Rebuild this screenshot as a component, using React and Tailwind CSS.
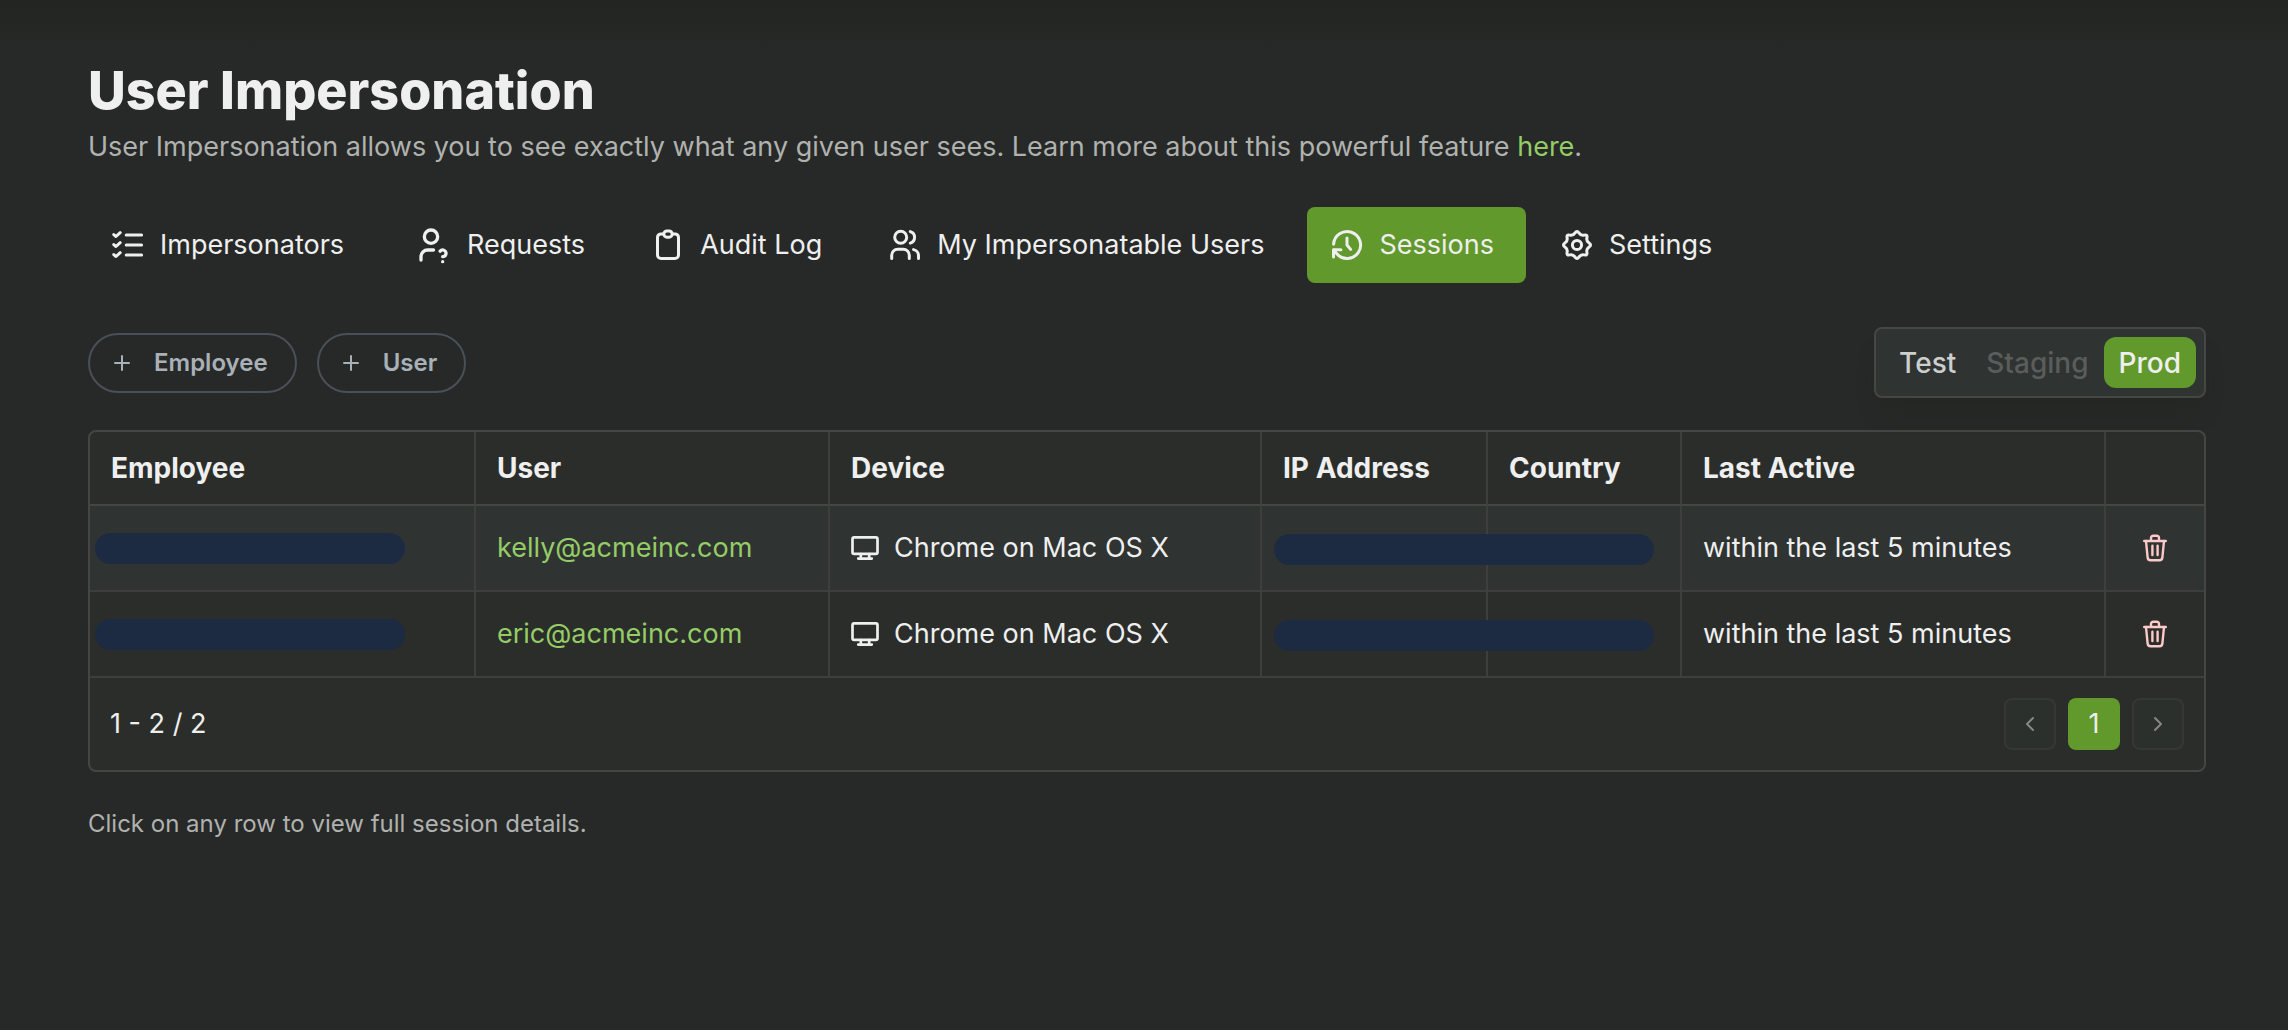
import { ChevronLeft, ChevronRight, Plus } from 'lucide-react';
import { TbUserQuestion } from 'react-icons/tb';
import { useState } from 'react';
import clsx from 'clsx';

function Icon({ children, className = 'size-8', viewBox = '0 0 32 32', strokeWidth = 3 }) {
  return (
    <svg
      aria-hidden="true"
      viewBox={viewBox}
      fill="none"
      stroke="currentColor"
      strokeWidth={strokeWidth}
      strokeLinecap="round"
      strokeLinejoin="round"
      className={clsx('shrink-0', className)}
    >
      {children}
    </svg>
  );
}

const ChecklistIcon = () => (
  <Icon>
    <path d="M1.8 5.6l2.2 1.9 4.2-3.8M1.8 15.6l2.2 1.9 4.2-3.8M1.8 25.6l2.2 1.9 4.2-3.8" />
    <path d="M14.2 6h15.4M14.2 16h15.4M14.2 26h15.4" />
  </Icon>
);

const ClipboardIcon = () => (
  <Icon>
    <path d="M11.5 4.9H9a3.5 3.5 0 0 0-3.5 3.5v17.6a3.5 3.5 0 0 0 3.5 3.5h14a3.5 3.5 0 0 0 3.5-3.5V8.4A3.5 3.5 0 0 0 23 4.9h-2.5" />
    <rect x="11.8" y="2" width="8.4" height="6.2" rx="3.1" />
  </Icon>
);

const PeopleIcon = () => (
  <Icon>
    <circle cx="11.7" cy="8.3" r="6" />
    <path d="M2.7 29.5v-3.2a6 6 0 0 1 6-6h5.6a6 6 0 0 1 6 6v3.2" />
    <path d="M21.3 2.6a6 6 0 0 1 0 11.5M24.6 20.6a6 6 0 0 1 4.9 5.9v3" />
  </Icon>
);

const HistoryIcon = () => (
  <Icon>
    <path d="M2.6 15.2A13.5 13.5 0 1 1 5.8 24.8L2.8 21" />
    <path d="M2.5 28v-7.2h7.4M16 9v7l3.6 4.4" />
  </Icon>
);

const GearIcon = () => (
  <Icon>
    <circle cx="16" cy="16" r="4.6" />
    <path d="M14.1 3.9Q16 1 17.9 3.9Q19.8 6.8 23.2 6.1Q26.6 5.4 25.9 8.8Q25.2 12.2 28.1 14.1Q31 16 28.1 17.9Q25.2 19.8 25.9 23.2Q26.6 26.6 23.2 25.9Q19.8 25.2 17.9 28.1Q16 31 14.1 28.1Q12.2 25.2 8.8 25.9Q5.4 26.6 6.1 23.2Q6.8 19.8 3.9 17.9Q1 16 3.9 14.1Q6.8 12.2 6.1 8.8Q5.4 5.4 8.8 6.1Q12.2 6.8 14.1 3.9Z" />
  </Icon>
);

const MonitorIcon = () => (
  <Icon className="h-6 w-7" viewBox="0 0 28 24" strokeWidth={2.7}>
    <rect x="1.5" y="1.4" width="25" height="16.4" rx="1.6" />
    <path d="M9.8 18v4M18.2 18v4M7.2 22.6h13.6" />
  </Icon>
);

const TrashIcon = () => (
  <Icon className="h-7 w-6" viewBox="0 0 24 28" strokeWidth={2.4}>
    <path d="M1.2 7h21.6M8 7V4a2.2 2.2 0 0 1 2.2-2.2h3.6A2.2 2.2 0 0 1 16 4v3" />
    <path d="M3 7l1.6 16.4a3 3 0 0 0 3 2.8h8.8a3 3 0 0 0 3-2.8L21 7M9.4 11.8v9.2M14.6 11.8v9.2" />
  </Icon>
);

const tabs = [
  { label: 'Impersonators', icon: ChecklistIcon },
  { label: 'Requests', icon: () => <TbUserQuestion className="size-10" /> },
  { label: 'Audit Log', icon: ClipboardIcon },
  { label: 'My Impersonatable Users', icon: PeopleIcon },
  { label: 'Sessions', icon: HistoryIcon },
  { label: 'Settings', icon: GearIcon },
];

const environments = [{ name: 'Test' }, { name: 'Staging', disabled: true }, { name: 'Prod' }];

const columns = [
  { title: 'Employee', width: 'w-[386px]' },
  { title: 'User', width: 'w-[354px]' },
  { title: 'Device', width: 'w-[432px]' },
  { title: 'IP Address', width: 'w-[226px]' },
  { title: 'Country', width: 'w-[194px]' },
  { title: 'Last Active', width: 'w-[424px]' },
  { title: '', width: 'w-[98px]' },
];

const sessions = [
  { user: 'kelly@acmeinc.com', device: 'Chrome on Mac OS X', lastActive: 'within the last 5 minutes' },
  { user: 'eric@acmeinc.com', device: 'Chrome on Mac OS X', lastActive: 'within the last 5 minutes' },
];

const cell = 'border-r-2 border-[#3d3f3c] px-[21px] text-left last:border-r-0';

export default function App() {
  const [tab, setTab] = useState('Sessions');
  const [env, setEnv] = useState('Prod');

  return (
    <div className="min-h-screen bg-[#272928] bg-linear-to-b from-[#232522] to-[#272928] to-[50px] pt-[61px] pr-[82px] pl-[88px] font-['Inter',sans-serif] text-[27px] leading-10 text-[#eeefee]">
      <header>
        <h1 className="text-[52px] leading-[60px] font-extrabold">User Impersonation</h1>
        <p className="mt-1.5 text-[#b0b2af]">
          User Impersonation allows you to see exactly what any given user sees. Learn more about
          this powerful feature{' '}
          <a href="#docs" className="text-[#94cc66]">
            here
          </a>
          .
        </p>
      </header>

      <nav className="mt-10 flex gap-[11px]">
        {tabs.map(({ label, icon: TabIcon }) => (
          <button
            key={label}
            type="button"
            onClick={() => setTab(label)}
            className={clsx(
              'flex h-[76px] items-center gap-4 rounded-lg pr-8 pl-6 whitespace-nowrap',
              tab === label && 'bg-[#61992c]',
            )}
          >
            <TabIcon />
            {label}
          </button>
        ))}
      </nav>

      <div className="mt-11 flex items-center justify-between">
        <div className="flex gap-5 text-2xl font-semibold text-[#a9b1b8]">
          {['Employee', 'User'].map((filter) => (
            <button
              key={filter}
              type="button"
              className="flex h-[60px] items-center gap-5 rounded-full border-2 border-[#495057] pr-[27px] pl-5"
            >
              <Plus className="size-6" strokeWidth={2} />
              {filter}
            </button>
          ))}
        </div>

        <div className="flex items-center rounded-lg border-2 border-[#454744] bg-[#2f3332] p-2 text-[28px] font-medium shadow-[0_20px_24px_-8px_rgba(32,34,28,0.3)]">
          {environments.map(({ name, disabled }) => (
            <button
              key={name}
              type="button"
              disabled={disabled}
              onClick={() => setEnv(name)}
              className={clsx(
                'h-[51px] rounded-xl px-[15px]',
                disabled && 'text-[#5a5d5b]',
                !disabled && env !== name && 'text-[#cdcfcd]',
                env === name && 'bg-[#61992c]',
              )}
            >
              {name}
            </button>
          ))}
        </div>
      </div>

      <section className="mt-8 overflow-hidden rounded-lg border-2 border-[#454643] bg-[#2b2d2a]">
        <table className="w-full table-fixed border-separate border-spacing-0">
          <thead>
            <tr>
              {columns.map(({ title, width }) => (
                <th
                  key={title}
                  className={clsx(cell, width, 'h-[74px] border-b-2 border-b-[#454643] text-[28px] font-bold')}
                >
                  {title}
                </th>
              ))}
            </tr>
          </thead>
          <tbody>
            {sessions.map((session) => (
              <tr key={session.user} className="first:bg-[#2f3332]">
                <td className={clsx(cell, 'h-[86px] border-b-2')}>
                  <div className="-ml-4 h-[31px] w-[310px] rounded-2xl bg-[#1d2b42]" />
                </td>
                <td className={clsx(cell, 'border-b-2 text-[#94cc66]')}>{session.user}</td>
                <td className={clsx(cell, 'border-b-2')}>
                  <div className="flex items-center gap-[15px]">
                    <MonitorIcon />
                    {session.device}
                  </div>
                </td>
                {/* the masked IP and country run together as one bar */}
                <td className={clsx(cell, 'relative border-b-2')}>
                  <div className="absolute top-7 left-3 z-10 h-[31px] w-[380px] rounded-2xl bg-[#1d2b42]" />
                </td>
                <td className={clsx(cell, 'border-b-2')} />
                <td className={clsx(cell, 'border-b-2')}>{session.lastActive}</td>
                <td className={clsx(cell, 'border-b-2')}>
                  <button type="button" aria-label="End session" className="mx-auto block text-[#fec9c9]">
                    <TrashIcon />
                  </button>
                </td>
              </tr>
            ))}
          </tbody>
        </table>

        <div className="flex items-center justify-between p-5">
          <span>1 - 2 / 2</span>
          <div className="flex gap-3">
            <button
              type="button"
              disabled
              aria-label="Previous page"
              className="flex size-[52px] items-center justify-center rounded-lg border-2 border-[#353734] bg-[#2c302d] text-[#858785]"
            >
              <ChevronLeft className="size-6" strokeWidth={2} />
            </button>
            <button type="button" className="size-[52px] rounded-lg bg-[#61992c]">
              1
            </button>
            <button
              type="button"
              disabled
              aria-label="Next page"
              className="flex size-[52px] items-center justify-center rounded-lg border-2 border-[#353734] bg-[#2c302d] text-[#858785]"
            >
              <ChevronRight className="size-6" strokeWidth={2} />
            </button>
          </div>
        </div>
      </section>

      <p className="mt-9 text-2xl text-[#b0b2af]">Click on any row to view full session details.</p>
    </div>
  );
}
